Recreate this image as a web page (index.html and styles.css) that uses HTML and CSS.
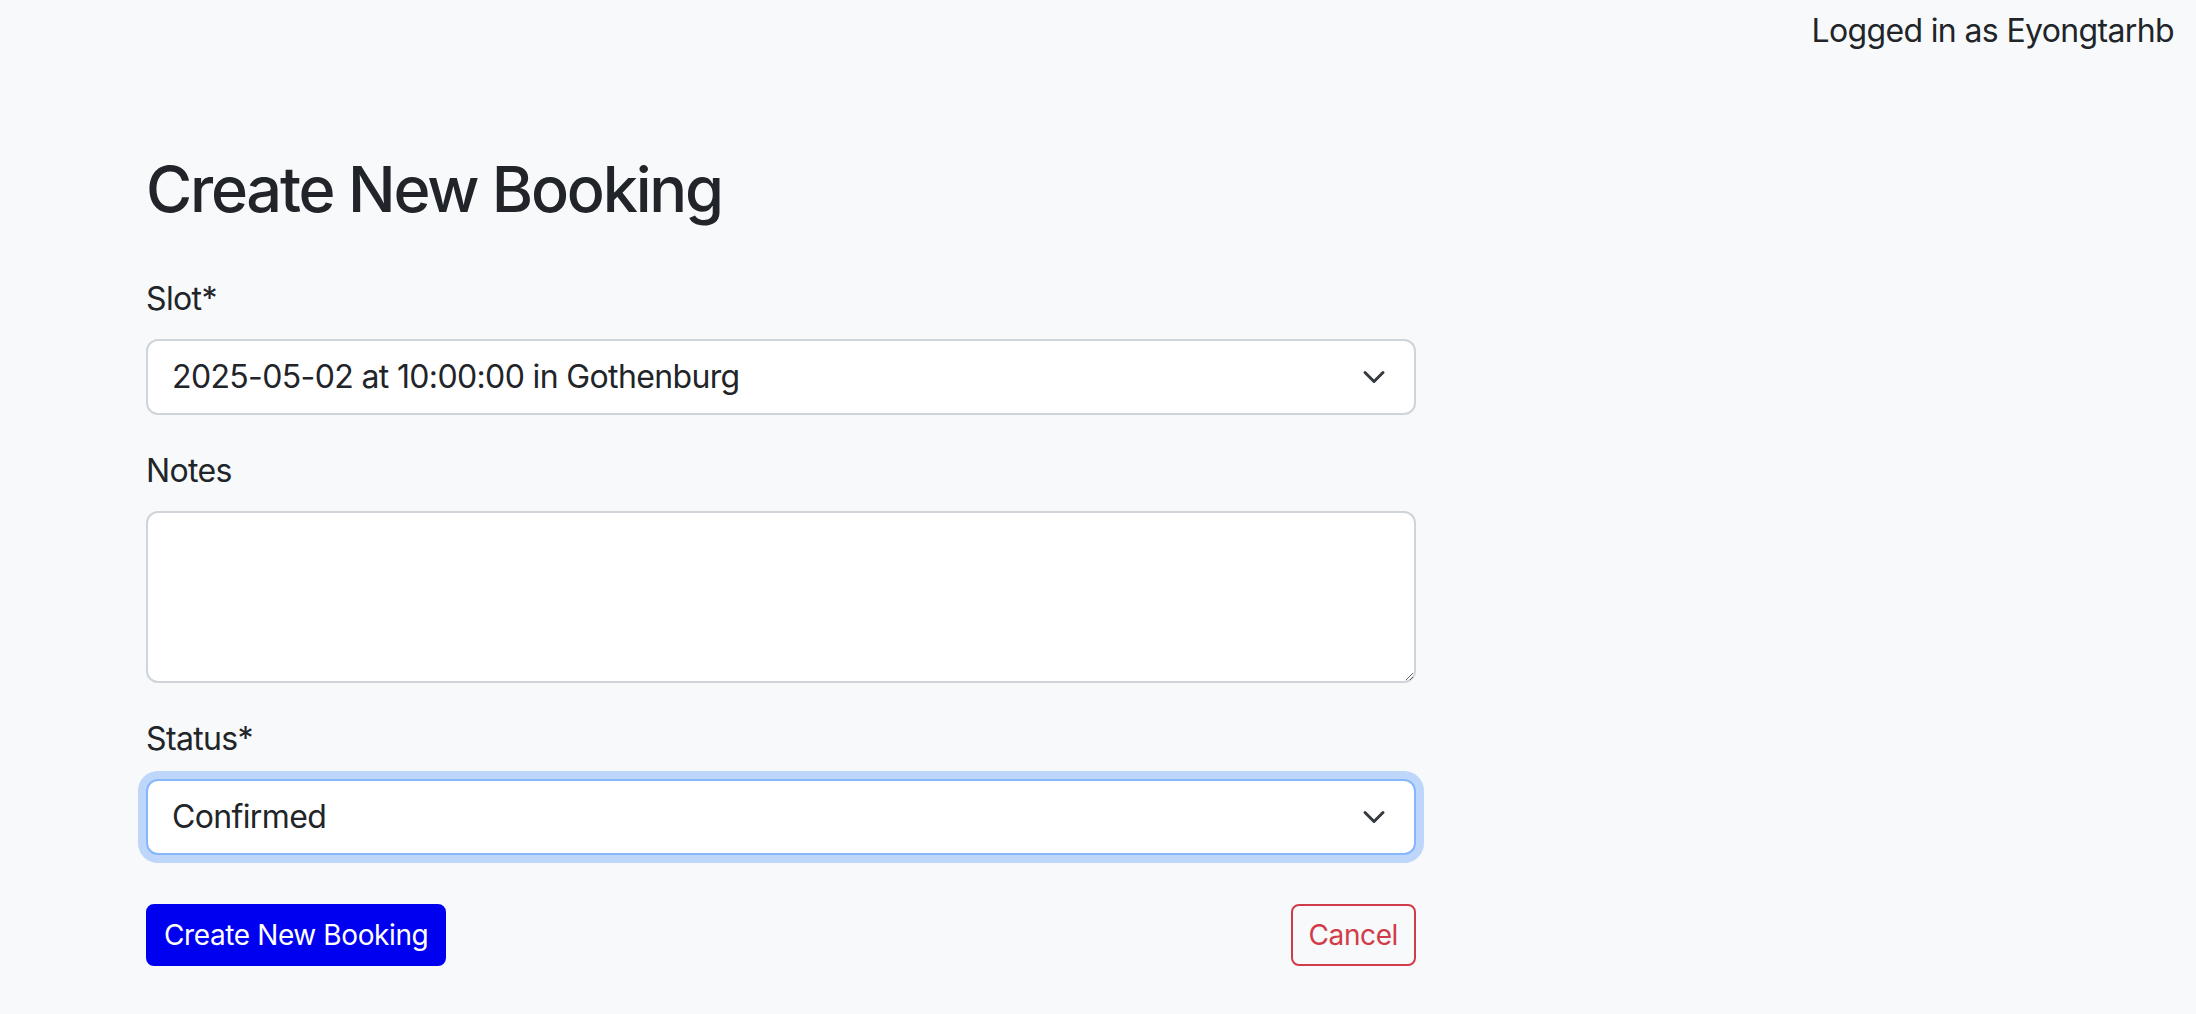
FILE: index.html
```html
<!DOCTYPE html>
<html lang="en">
<head>
<meta charset="utf-8">
<title>Create New Booking</title>
<link rel="stylesheet" href="styles.css">
</head>
<body>
<header class="topbar">
  <span class="user">Logged in as Eyongtarhb</span>
</header>
<main class="page">
  <h1 class="title">Create New Booking</h1>
  <form class="form">
    <div class="group">
      <label class="label">Slot*</label>
      <div class="select">
        <span class="select-value">2025-05-02 at 10:00:00 in Gothenburg</span>
        <svg class="chevron" viewBox="0 0 16 16" width="24" height="24"><path d="M2 5l6 6 6-6" fill="none" stroke="#343a40" stroke-width="2" stroke-linecap="round" stroke-linejoin="round"/></svg>
      </div>
    </div>
    <div class="group">
      <label class="label">Notes</label>
      <textarea class="textarea"></textarea>
    </div>
    <div class="group">
      <label class="label">Status*</label>
      <div class="select focused">
        <span class="select-value">Confirmed</span>
        <svg class="chevron" viewBox="0 0 16 16" width="24" height="24"><path d="M2 5l6 6 6-6" fill="none" stroke="#343a40" stroke-width="2" stroke-linecap="round" stroke-linejoin="round"/></svg>
      </div>
    </div>
    <div class="actions">
      <button type="button" class="btn btn-primary">Create New Booking</button>
      <button type="button" class="btn btn-cancel">Cancel</button>
    </div>
  </form>
</main>
</body>
</html>
```
FILE: styles.css
```css
* { box-sizing: border-box; }
html, body { margin: 0; }
body {
  background: #f8f9fa;
  color: #212529;
  font-family: Inter, "Noto Sans", "Liberation Sans", sans-serif;
  font-size: 32px;
  line-height: 48px;
  letter-spacing: -0.02em;
}
.topbar {
  display: flex;
  justify-content: flex-end;
  padding: 7px 22px 0 0;
  height: 55px;
}
.page {
  padding: 97px 0 0 146px;
  width: 1416px;
}
.title {
  margin: 0 0 47px;
  font-size: 63px;
  line-height: 1.2;
  font-weight: 500;
  letter-spacing: -0.035em;
}
.form { display: flex; flex-direction: column; }
.group { margin-bottom: 32px; }
.label {
  display: block;
  margin-bottom: 16px;
}
.select {
  display: flex;
  align-items: center;
  justify-content: space-between;
  height: 76px;
  padding: 0 28px 0 24px;
  background: #fff;
  border: 2px solid #ced4da;
  border-radius: 12px;
}
.select.focused {
  border-color: #86b7fe;
  box-shadow: 0 0 0 8px rgba(13, 110, 253, 0.25);
}
.chevron { display: block; flex: none; }
.textarea {
  display: block;
  width: 100%;
  height: 172px;
  background: #fff;
  border: 2px solid #ced4da;
  border-radius: 12px;
  font: inherit;
  padding: 12px 24px;
}
.actions {
  display: flex;
  justify-content: space-between;
  margin-top: 17px;
}
.btn {
  font-family: inherit;
  font-size: 28px;
  line-height: 42px;
  letter-spacing: -0.014em;
  padding: 8px 16px;
  border: 2px solid transparent;
  border-radius: 8px;
  cursor: pointer;
}
.btn-primary {
  background: #0000f0;
  border-color: #0000f0;
  color: #fff;
}
.btn-cancel {
  background: transparent;
  border-color: #d03c49;
  color: #d03c49;
}
```
